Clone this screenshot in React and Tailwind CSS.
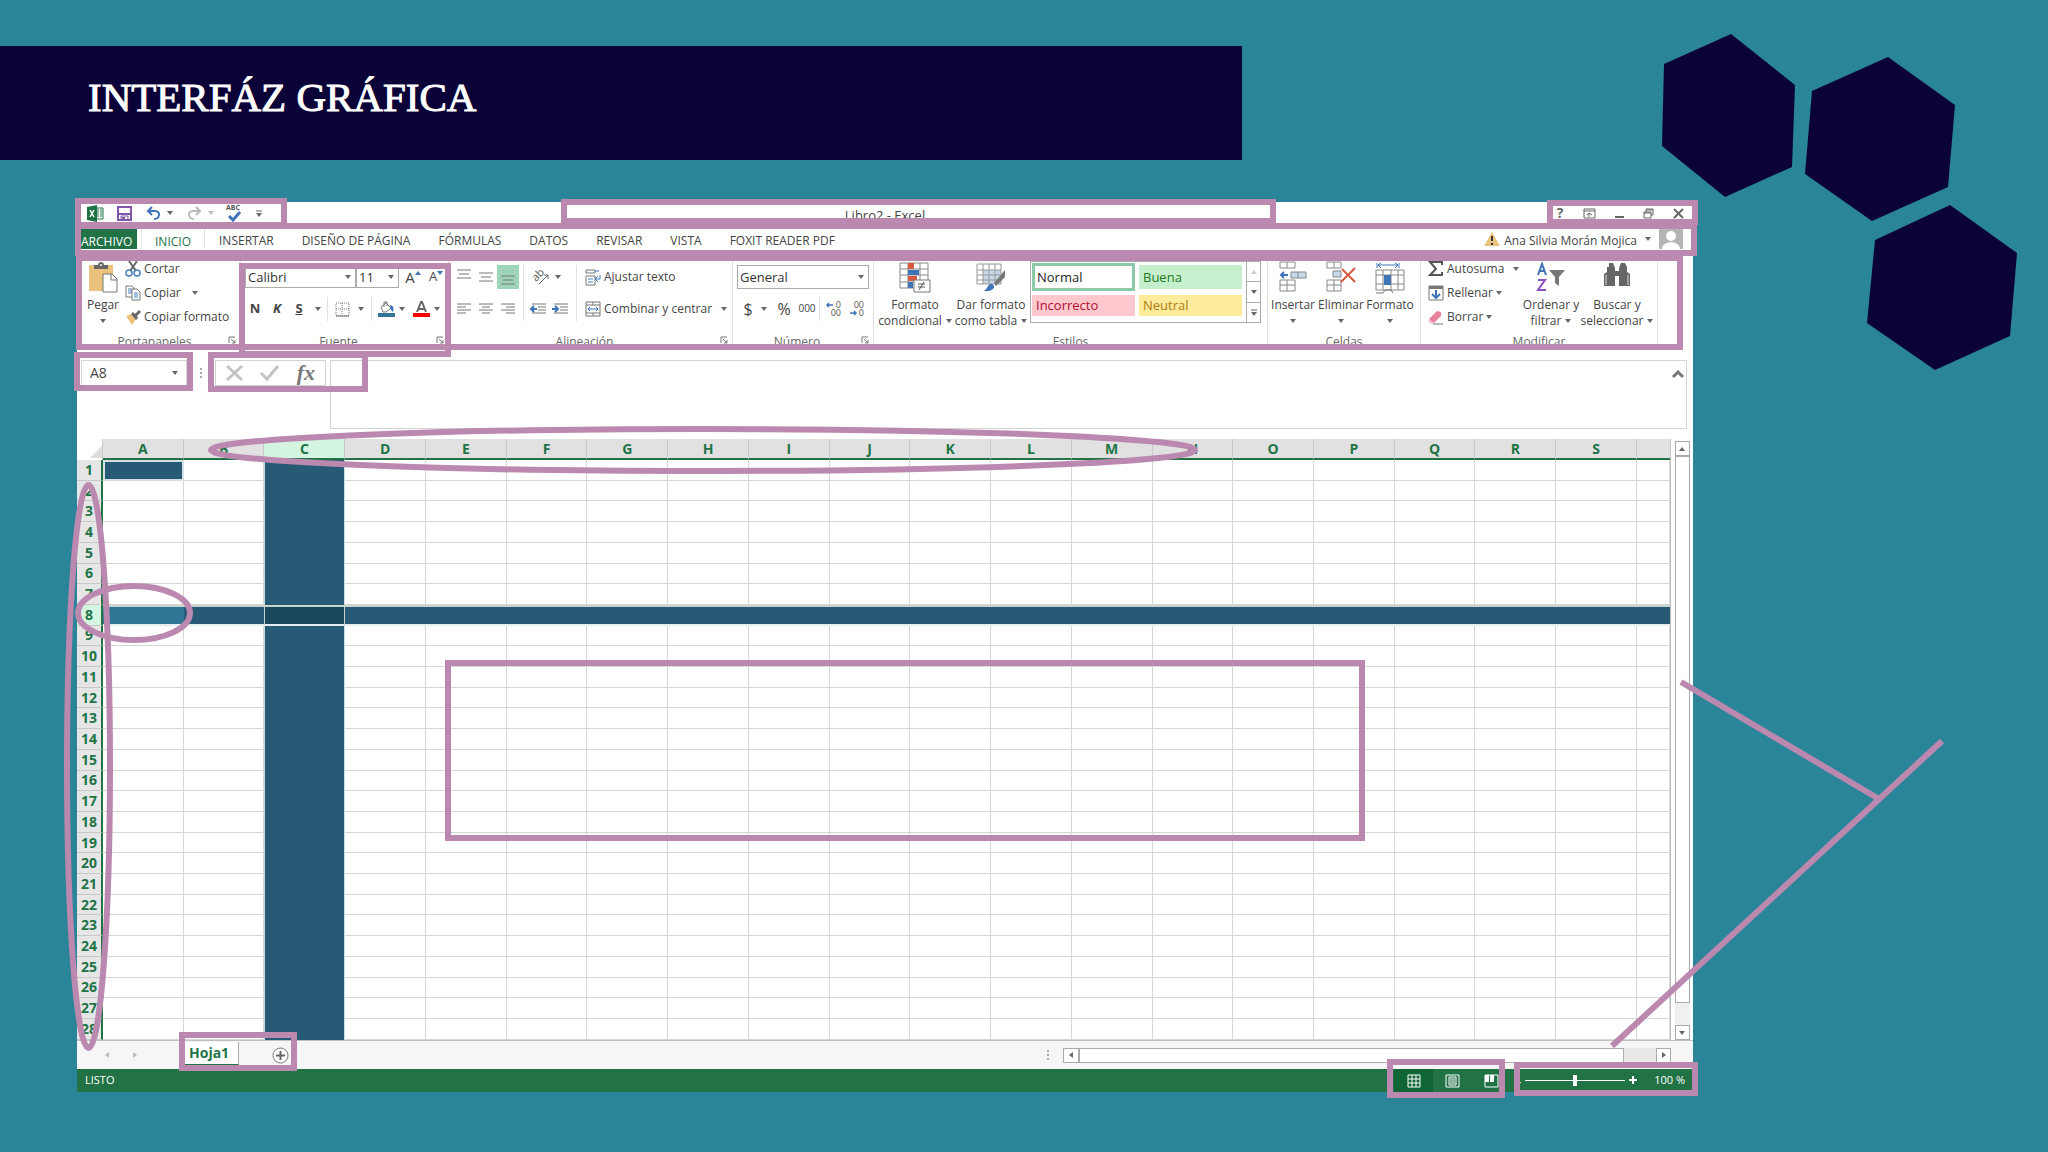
import React from 'react';

const COLUMNS = 'ABCDEFGHIJKLMNOPQRS'.split('');
const ROWS = Array.from({ length: 28 }, (_, i) => i + 1);
const TABS = ['INSERTAR', 'DISEÑO DE PÁGINA', 'FÓRMULAS', 'DATOS', 'REVISAR', 'VISTA', 'FOXIT READER PDF'];

const Svg = ({ w, h, children, className = 'shrink-0' }) => (
  <svg width={w} height={h} viewBox={`0 0 ${w} ${h}`} fill="none" className={`overflow-visible ${className}`} aria-hidden="true">
    {children}
  </svg>
);

const Arrow = ({ className = 'shrink-0', color = '#666' }) => (
  <Svg w={6} h={4} className={className}><path d="M0 0h6L3 4z" fill={color} /></Svg>
);

const Launcher = () => (
  <Svg w={8} h={8}>
    <path d="M1 7V1h6M3 3l4 4M7 4v3H4" stroke="#777" />
  </Svg>
);

/* ---------- icons ---------- */

const ExcelIcon = () => (
  <Svg w={17} h={17}>
    <path d="M9 3h7v11H9z" fill="#fff" stroke="#217346" />
    <path d="M10 5h2M13 5h2M10 7h2M13 7h2M10 9h2M13 9h2M10 11h2M13 11h2" stroke="#217346" />
    <path d="M0 2l10-2v17L0 15z" fill="#1e7145" />
    <path d="M3 5l4 7M7 5l-4 7" stroke="#fff" strokeWidth="1.5" />
  </Svg>
);

const SaveIcon = () => (
  <Svg w={15} h={15}>
    <path d="M1 1h13v13H1z" stroke="#8057a8" strokeWidth="2" />
    <path d="M1 8h13" stroke="#8057a8" strokeWidth="2" />
    <path d="M4 14v-4h7v4" stroke="#8057a8" />
    <path d="M5 11h3v3H5z" fill="#8057a8" />
  </Svg>
);

const UndoIcon = ({ color, flip }) => (
  <Svg w={15} h={14}>
    <g transform={flip ? 'translate(15 0) scale(-1 1)' : undefined}>
      <path d="M6 1L2 5l4 4M2 5h7c6 0 5 8-1 8" stroke={color} strokeWidth="2" />
    </g>
  </Svg>
);

const SpellIcon = () => (
  <Svg w={16} h={17}>
    <text x="0" y="5" fontSize="7" fontWeight="bold" fill="#555" fontFamily="Open Sans, sans-serif">ABC</text>
    <path d="M3 11l4 4 7-8" stroke="#3f74b8" strokeWidth="3" />
  </Svg>
);

const PasteIcon = () => (
  <Svg w={30} h={31}>
    <path d="M1 3h24v26H1z" fill="#ebc27c" />
    <path d="M6 7V3h4c0-4 6-4 6 0h4v4z" fill="#666" />
    <circle cx="13" cy="3" r="1" fill="#fff" />
    <path d="M15 12h9l5 5v13H15z" fill="#fff" stroke="#777" />
    <path d="M23 12v6h6" stroke="#777" />
  </Svg>
);

const CutIcon = () => (
  <Svg w={16} h={16}>
    <path d="M4 0l7 10M12 0L5 10" stroke="#666" strokeWidth="2" />
    <circle cx="4" cy="12" r="3" stroke="#4a7ebb" strokeWidth="1.5" />
    <circle cx="12" cy="12" r="3" stroke="#4a7ebb" strokeWidth="1.5" />
  </Svg>
);

const CopyIcon = () => (
  <Svg w={16} h={16}>
    <path d="M1 1h6l2 2v9H1z" fill="#fff" stroke="#777" />
    <path d="M3 4h4M3 6h4M3 8h4" stroke="#4a7ebb" />
    <path d="M7 4h5l3 3v8H7z" fill="#fff" stroke="#777" />
    <path d="M9 8h4M9 10h4M9 12h4" stroke="#4a7ebb" />
  </Svg>
);

const BrushIcon = () => (
  <Svg w={16} h={16}>
    <path d="M1 7l5-2 5 5-4 6z" fill="#ebc27c" />
    <path d="M6 5l2-2 2 2 4-4 2 2-4 4 1 2-2 2z" fill="#666" />
  </Svg>
);

const BordersIcon = () => (
  <Svg w={15} h={15}>
    <path d="M1 1h13v13H1zM7 1v13M1 7h13" stroke="#777" strokeDasharray="1 1" />
    <path d="M1 14h13" stroke="#777" />
  </Svg>
);

const FillIcon = () => (
  <Svg w={17} h={17}>
    <path d="M3 6l5-4 5 5-5 4H5z" fill="#fff" stroke="#777" />
    <path d="M6 6V1h3v4" stroke="#777" />
    <path d="M12 4c4 1 4 4 3 7-2-1-2-3-3-4z" fill="#3f74b8" />
    <path d="M0 12h17v4H0z" fill="#2f7595" />
  </Svg>
);

const FontColorIcon = () => (
  <Svg w={17} h={17}>
    <path d="M4 11L8 1h1l4 10M6 8h5" stroke="#666" strokeWidth="2" />
    <path d="M0 12h17v4H0z" fill="#f00" />
  </Svg>
);

const LINES = {
  top: 'M0 1h14M2 5h10M0 9h14',
  middle: 'M0 4h14M2 8h10M0 12h14',
  bottom: 'M0 7h14M2 11h10M0 15h14',
  left: 'M0 3h14M0 6h9M0 9h14M0 12h9',
  center: 'M0 3h14M3 6h8M0 9h14M3 12h8',
  right: 'M0 3h14M5 6h9M0 9h14M5 12h9',
};
const LinesIcon = ({ kind }) => (
  <Svg w={14} h={16}><path d={LINES[kind]} stroke="#777" /></Svg>
);

const OrientationIcon = () => (
  <Svg w={17} h={17}>
    <text x="0" y="0" fontSize="11" fill="#555" transform="translate(4 13) rotate(-45)" fontFamily="Open Sans, sans-serif">ab</text>
    <path d="M7 15l9-9M12 6h4v4" stroke="#666" />
  </Svg>
);

const IndentIcon = ({ out }) => (
  <Svg w={16} h={14}>
    <path d="M2 2h14M8 5h8M8 8h8M2 11h14" stroke="#777" />
    <path d={out ? 'M7 7H1M4 4L1 7l3 3' : 'M0 7h6M3 4l3 3-3 3'} stroke="#3f74b8" strokeWidth="2" />
  </Svg>
);

const WrapIcon = () => (
  <Svg w={16} h={17}>
    <path d="M1 1h9v3H1zM1 7h9v9H1z" stroke="#777" />
    <path d="M3 10h5M3 13h5" stroke="#4a7ebb" />
    <path d="M10 2h4M15 6v4h-4M13 7l-3 3 3 3" stroke="#3f74b8" />
  </Svg>
);

const MergeIcon = () => (
  <Svg w={16} h={16}>
    <path d="M1 1h14v14H1zM1 4h14M1 12h14M8 1v3M8 12v3" stroke="#777" />
    <path d="M3 8h10M5 6L3 8l2 2M11 6l2 2-2 2" stroke="#3f74b8" />
  </Svg>
);

const DecimalIcon = ({ more }) => (
  <Svg w={16} h={16}>
    <g fontSize="9" fill="#555" textAnchor="end" fontFamily="Open Sans, sans-serif">
      <text x="15" y="7">{more ? '0' : '00'}</text>
      <text x="15" y="15">{more ? '00' : '0'}</text>
    </g>
    <path d={more ? 'M7 4H1M3 2L1 4l2 2' : 'M1 12h6M5 10l2 2-2 2'} stroke="#3f74b8" strokeWidth="1.5" />
  </Svg>
);

const CondFormatIcon = () => (
  <Svg w={32} h={31}>
    <path d="M1 1h28v25H1zM1 7h28M1 13h28M1 20h28M9 1v25M21 1v25" stroke="#888" />
    <path d="M9 1h6v6H9zM9 14h9v5H9z" fill="#d65a3c" />
    <path d="M9 8h11v5H9zM9 20h5v6H9z" fill="#3f74b8" />
    <path d="M15 18h16v12H15z" fill="#fff" stroke="#777" />
    <path d="M19 22h7M19 25h7M25 20l-5 8" stroke="#555" />
  </Svg>
);

const TableFormatIcon = () => (
  <Svg w={31} h={31}>
    <path d="M7 8h18v14H7z" fill="#c5d7e8" />
    <path d="M1 2h24v20H1zM1 8h24M1 13h24M1 18h24M7 2v20M13 2v20M19 2v20" stroke="#999" />
    <path d="M29 8v7l-9 9-2-3z" fill="#777" />
    <path d="M7 29c5-1 4-8 9-7 5 3 1 8-9 7z" fill="#3f74b8" />
  </Svg>
);

const InsertCellsIcon = () => (
  <Svg w={28} h={31}>
    <path d="M1 0h15v6H1zM8 0v6M1 18h15v11H1zM8 18v11M1 23h15" stroke="#888" />
    <path d="M12 10h15v6H12z" fill="#c5d7e8" stroke="#888" />
    <path d="M19 10v6" stroke="#888" />
    <path d="M9 13H2M5 10l-3 3 3 3" stroke="#3f74b8" strokeWidth="2" />
  </Svg>
);

const DeleteCellsIcon = () => (
  <Svg w={30} h={31}>
    <path d="M1 0h14v6H1zM8 0v6M1 18h14v11H1zM8 18v11M1 23h14" stroke="#888" />
    <path d="M7 9h8v6H7z" fill="#c5d7e8" stroke="#888" />
    <path d="M16 7l13 13M29 6L15 20" stroke="#d65a3c" strokeWidth="2" />
  </Svg>
);

const FormatCellsIcon = () => (
  <Svg w={30} h={32}>
    <path d="M2 1v5M24 1v5M3 3h20M6 1L3 3l3 3M20 1l3 2-3 3" stroke="#3f74b8" />
    <path d="M1 8h28v20H1zM1 13h28M1 22h28M8 8v20M16 8v20M23 8v20" stroke="#888" />
    <path d="M9 13h7v10H9z" fill="#3f74b8" />
    <path d="M1 31h7l2-3h6l2 3" stroke="#777" />
  </Svg>
);

const SigmaIcon = () => (
  <Svg w={16} h={16}><path d="M14 4V1H2l6 7-6 6h12v-3" stroke="#555" strokeWidth="2" /></Svg>
);

const FillDownIcon = () => (
  <Svg w={16} h={16}>
    <path d="M1 1h14v14H1z" stroke="#777" />
    <path d="M1 1h14v3H1z" fill="#777" />
    <path d="M8 5v8M4 9l4 4 4-4" stroke="#3f74b8" strokeWidth="2" />
  </Svg>
);

const EraserIcon = () => (
  <Svg w={16} h={16}>
    <path d="M1 10l8-8 4 1v4l-7 7z" fill="#e8829a" />
    <path d="M1 10l5 4-2 1-3-2z" fill="#f3b9c6" />
    <path d="M5 15h10" stroke="#777" />
  </Svg>
);

const SortIcon = () => (
  <Svg w={30} h={31}>
    <path d="M2 13L6 2l4 11M3 9h6" stroke="#3f74b8" strokeWidth="2" />
    <path d="M2 18h7l-7 10h8" stroke="#8a4fc0" strokeWidth="2" />
    <path d="M13 8h16l-6 7v9l-4-3v-6z" fill="#777" />
  </Svg>
);

const FindIcon = () => (
  <Svg w={28} h={26}>
    <path d="M6 1h4l2 5v18H1V12l3-2V5h2zM18 1h4l2 4v5l3 2v12H16V6z" fill="#666" />
    <path d="M12 9h4v5h-4z" fill="#666" />
    <path d="M3 13v10M25 13v10" stroke="#ddd" />
  </Svg>
);

/* ---------- ribbon pieces ---------- */

const IconButton = ({ label, className = '', children }) => (
  <button aria-label={label} className={`flex shrink-0 items-center justify-center ${className}`}>{children}</button>
);

const TextButton = ({ icon, label, arrow, gap = '' }) => (
  <button className="flex h-6 items-center gap-[3px] whitespace-nowrap">
    <span className="flex w-4 justify-center">{icon}</span>
    <span>{label}</span>
    {arrow && <Arrow className={`shrink-0 ${gap}`} />}
  </button>
);

const BigButton = ({ icon, lines, className }) => (
  <button className={`flex shrink-0 flex-col items-center pt-[13px] leading-4 whitespace-nowrap ${className}`}>
    <span className="flex h-[35px] items-start">{icon}</span>
    <span>{lines[0]}</span>
    <span className="flex h-4 items-center gap-1">{lines[1]}<Arrow /></span>
  </button>
);

const Group = ({ label, launcher, className, children }) => (
  <section className={`flex shrink-0 flex-col border-r border-[#e1e1e1] ${className}`}>
    <div className="flex h-[82px]">{children}</div>
    <div className="flex h-5 items-end text-[#666]">
      <span className="flex-1 text-center">{label}</span>
      {launcher && <span className="pr-1 pb-1.5"><Launcher /></span>}
    </div>
  </section>
);

const Picker = ({ label, value, className }) => (
  <span className={`relative flex border border-[#ababab] bg-white ${className}`}>
    <select aria-label={label} className="w-full appearance-none bg-transparent pl-0.5 text-[13px] leading-5 text-[#333] outline-none">
      <option>{value}</option>
    </select>
    <Arrow className="pointer-events-none absolute top-1/2 right-1 -translate-y-1/2" />
  </span>
);

const Divider = () => <span className="h-6 w-px shrink-0 bg-[#e1e1e1]" />;

/* ---------- window parts ---------- */

function TitleBar() {
  return (
    <header className="flex h-[27px] items-start justify-between">
      <div className="flex h-[22px] w-[220px] items-center pl-2.5">
        <ExcelIcon />
        <IconButton label="Guardar" className="ml-[13px]"><SaveIcon /></IconButton>
        <IconButton label="Deshacer" className="ml-3.5 gap-1.5"><UndoIcon color="#3f74b8" /><Arrow /></IconButton>
        <IconButton label="Rehacer" className="ml-3.5 gap-1.5"><UndoIcon color="#bbb" flip /><Arrow color="#bbb" /></IconButton>
        <IconButton label="Ortografía" className="ml-3"><SpellIcon /></IconButton>
        <IconButton label="Personalizar" className="ml-3.5">
          <Svg w={6} h={7}><path d="M0 1h6" stroke="#666" /><path d="M0 3h6L3 7z" fill="#666" /></Svg>
        </IconButton>
      </div>
      <h2 className="h-[22px] text-[13px] leading-[26px]">Libro2 - Excel</h2>
      <div className="flex h-[22px] w-[220px] items-center justify-end text-[#666]">
        <IconButton label="Ayuda" className="w-[30px] text-sm font-bold">?</IconButton>
        <IconButton label="Opciones de cinta" className="w-[29px]">
          <Svg w={13} h={11}><path d="M1 1h11v9H1zM1 3h11M6 9V5M4 7l2-2 3 2" stroke="#666" /></Svg>
        </IconButton>
        <IconButton label="Minimizar" className="w-[30px]">
          <Svg w={9} h={11}><path d="M0 9h9" stroke="#666" strokeWidth="2" /></Svg>
        </IconButton>
        <IconButton label="Restaurar" className="w-[29px]">
          <Svg w={11} h={11}><path d="M1 4h7v6H1zM3 4V1h7v6H8M1 5h7M3 2h7" stroke="#666" /></Svg>
        </IconButton>
        <IconButton label="Cerrar" className="w-[30px]">
          <Svg w={11} h={11}><path d="M1 1l9 9M10 1l-9 9" stroke="#666" strokeWidth="2" /></Svg>
        </IconButton>
      </div>
    </header>
  );
}

function TabBar() {
  return (
    <nav className="flex h-5 items-center pr-2.5 pl-1 leading-5 whitespace-nowrap">
      <button className="h-5 w-14 bg-[#217346] pt-[3px] text-left text-white">ARCHIVO</button>
      <button className="ml-1 h-5 w-16 border-x border-[#e1e1e1] pt-[3px] text-[#217346]">INICIO</button>
      {TABS.map((t) => (
        <button key={t} className="px-3.5 pt-[3px]">{t}</button>
      ))}
      <button className="ml-auto flex h-5 items-center">
        <Svg w={16} h={14}>
          <path d="M8 0l8 14H0z" fill="#ebc27c" />
          <path d="M8 4v5M8 11v2" stroke="#333" strokeWidth="2" />
        </Svg>
        <span className="mr-2 ml-1 pt-[3px]">Ana Silvia Morán Mojica</span>
        <Arrow />
        <span className="ml-2 flex h-5 w-6 items-end justify-center bg-[#b5b5b5]">
          <Svg w={20} h={19}>
            <circle cx="10" cy="6" r="5" fill="#fff" />
            <path d="M1 19c0-9 18-9 18 0z" fill="#fff" />
          </Svg>
        </span>
      </button>
    </nav>
  );
}

function Ribbon() {
  return (
    <div className="flex h-[101px] overflow-hidden pl-1">
      <Group label="Portapapeles" launcher className="w-[160px]">
        <BigButton className="w-11" icon={<PasteIcon />} lines={['Pegar', '']} />
        <div className="flex flex-col pt-2">
          <TextButton icon={<CutIcon />} label="Cortar" />
          <TextButton icon={<CopyIcon />} label="Copiar" arrow gap="ml-2" />
          <TextButton icon={<BrushIcon />} label="Copiar formato" />
        </div>
      </Group>

      <Group label="Fuente" launcher className="w-[208px]">
        <div className="flex flex-col gap-2 pt-4 pl-1">
          <div className="flex h-6 items-center">
            <Picker label="Fuente" value="Calibri" className="w-[111px]" />
            <Picker label="Tamaño" value="11" className="w-[43px]" />
            <IconButton label="Aumentar" className="w-7 text-[15px]">A<Arrow className="mb-2 rotate-180" color="#3f74b8" /></IconButton>
            <IconButton label="Disminuir" className="w-[18px] text-[13px]">A<Arrow className="mb-2" color="#3f74b8" /></IconButton>
          </div>
          <div className="flex h-6 items-center">
            <IconButton label="Negrita" className="w-5 text-[13px] font-bold">N</IconButton>
            <IconButton label="Cursiva" className="w-6 text-[13px] font-bold italic">K</IconButton>
            <IconButton label="Subrayado" className="w-[38px] gap-3 text-[13px] font-bold"><u>S</u><Arrow /></IconButton>
            <Divider />
            <IconButton label="Bordes" className="w-[43px] gap-2"><BordersIcon /><Arrow /></IconButton>
            <Divider />
            <IconButton label="Relleno" className="w-[38px] gap-1"><FillIcon /><Arrow /></IconButton>
            <IconButton label="Color de fuente" className="w-8 gap-1"><FontColorIcon /><Arrow /></IconButton>
          </div>
        </div>
      </Group>

      <Group label="Alineación" launcher className="w-[284px]">
        <div className="flex flex-col gap-2 pt-4 pl-1">
          <div className="flex h-6 items-center">
            <IconButton label="Arriba" className="w-[22px]"><LinesIcon kind="top" /></IconButton>
            <IconButton label="Medio" className="w-[22px]"><LinesIcon kind="middle" /></IconButton>
            <IconButton label="Abajo" className="h-6 w-[22px] bg-[#9fd5b7]"><LinesIcon kind="bottom" /></IconButton>
          </div>
          <div className="flex h-6 items-center">
            <IconButton label="Izquierda" className="w-[22px]"><LinesIcon kind="left" /></IconButton>
            <IconButton label="Centro" className="w-[22px]"><LinesIcon kind="center" /></IconButton>
            <IconButton label="Derecha" className="w-[22px]"><LinesIcon kind="right" /></IconButton>
          </div>
        </div>
        <div className="mt-4 ml-1 flex h-14 w-[54px] flex-col gap-2 border-x border-[#e1e1e1]">
          <IconButton label="Orientación" className="ml-1.5 h-6 w-8 gap-1.5"><OrientationIcon /><Arrow /></IconButton>
          <div className="flex h-6 items-center gap-1.5 pl-1.5">
            <IconButton label="Reducir sangría"><IndentIcon out /></IconButton>
            <IconButton label="Aumentar sangría"><IndentIcon /></IconButton>
          </div>
        </div>
        <div className="flex flex-col gap-2 pt-4 pl-2">
          <TextButton icon={<WrapIcon />} label="Ajustar texto" />
          <TextButton icon={<MergeIcon />} label="Combinar y centrar" arrow gap="ml-1.5" />
        </div>
      </Group>

      <Group label="Número" launcher className="w-[141px]">
        <div className="flex flex-col gap-2 pt-4 pl-1">
          <Picker label="Formato de número" value="General" className="h-6 w-[132px]" />
          <div className="flex h-6 items-center">
            <IconButton label="Moneda" className="w-9 gap-2 text-base">$<Arrow /></IconButton>
            <IconButton label="Porcentaje" className="w-[22px] text-base">%</IconButton>
            <IconButton label="Millares" className="w-[24px] text-[10px]">000</IconButton>
            <Divider />
            <IconButton label="Más decimales" className="w-[27px]"><DecimalIcon more /></IconButton>
            <IconButton label="Menos decimales" className="w-5"><DecimalIcon /></IconButton>
          </div>
        </div>
      </Group>

      <Group label="Estilos" className="w-[394px]">
        <BigButton className="w-[82px]" icon={<CondFormatIcon />} lines={['Formato', 'condicional']} />
        <BigButton className="w-[70px]" icon={<TableFormatIcon />} lines={['Dar formato', 'como tabla']} />
        <div className="mt-3 ml-1 flex h-[62px] w-[231px] border border-[#ababab] text-[13px]">
          <div className="grid flex-1 grid-cols-2 gap-x-1 gap-y-0.5 p-px pr-1 pb-1">
            <button className="border-3 border-[#8cc9a8] pl-0.5 text-left leading-5 text-[#222]">Normal</button>
            <button className="my-0.5 bg-[#c6efce] pl-1 text-left leading-5 text-[#1c7a1c]">Buena</button>
            <button className="my-0.5 bg-[#ffc7ce] pl-1 text-left leading-5 text-[#b01030]">Incorrecto</button>
            <button className="my-0.5 bg-[#ffeb9c] pl-1 text-left leading-5 text-[#ad7a10]">Neutral</button>
          </div>
          <div className="flex w-3.5 flex-col divide-y divide-[#ababab] border-l border-[#ababab]">
            <IconButton label="Subir" className="flex-1"><Arrow className="rotate-180" color="#ccc" /></IconButton>
            <IconButton label="Bajar" className="flex-1"><Arrow /></IconButton>
            <IconButton label="Más" className="flex-1">
              <Svg w={6} h={7}><path d="M0 1h6" stroke="#666" /><path d="M0 3h6L3 7z" fill="#666" /></Svg>
            </IconButton>
          </div>
        </div>
      </Group>

      <Group label="Celdas" className="w-[153px]">
        <BigButton className="w-[50px]" icon={<InsertCellsIcon />} lines={['Insertar', '']} />
        <BigButton className="w-[46px]" icon={<DeleteCellsIcon />} lines={['Eliminar', '']} />
        <BigButton className="w-[52px]" icon={<FormatCellsIcon />} lines={['Formato', '']} />
      </Group>

      <Group label="Modificar" className="w-[237px]">
        <div className="flex w-[98px] flex-col pt-2 pl-[7px]">
          <TextButton icon={<SigmaIcon />} label="Autosuma" arrow gap="ml-1.5" />
          <TextButton icon={<FillDownIcon />} label="Rellenar" arrow />
          <TextButton icon={<EraserIcon />} label="Borrar" arrow />
        </div>
        <BigButton className="w-16" icon={<SortIcon />} lines={['Ordenar y', 'filtrar']} />
        <BigButton className="w-[68px]" icon={<FindIcon />} lines={['Buscar y', 'seleccionar']} />
      </Group>
    </div>
  );
}

function FormulaBar() {
  return (
    <div className="flex h-[89px] items-start pt-2.5 pr-1.5 pl-1">
      <div className="flex h-[26px] w-[106px] items-center border border-[#d4d4d4] pr-2 pl-2">
        <input aria-label="Cuadro de nombres" defaultValue="A8" className="w-full text-sm outline-none" />
        <Arrow />
      </div>
      <span className="flex h-[26px] w-7 items-center justify-center">
        <Svg w={2} h={11}><path d="M1 0v2M1 4v2M1 8v2" stroke="#aaa" strokeWidth="2" /></Svg>
      </span>
      <div className="flex h-[26px] w-[111px] items-center justify-between border border-[#d4d4d4] px-2.5">
        <IconButton label="Cancelar"><Svg w={17} h={16}><path d="M1 1l15 14M16 1L1 15" stroke="#c4c4c4" strokeWidth="3" /></Svg></IconButton>
        <IconButton label="Introducir"><Svg w={19} h={16}><path d="M1 8l6 6L18 1" stroke="#c4c4c4" strokeWidth="3" /></Svg></IconButton>
        <IconButton label="Insertar función" className="font-['Liberation_Serif',serif] text-[22px] leading-6 font-bold text-[#777] italic">fx</IconButton>
      </div>
      <div className="ml-1 flex h-[69px] flex-1 items-start border border-[#d4d4d4] pr-0.5">
        <textarea aria-label="Barra de fórmulas" className="h-full flex-1 resize-none outline-none" />
        <IconButton label="Contraer" className="mt-2">
          <Svg w={12} h={9}><path d="M1 8l5-5 5 5" stroke="#777" strokeWidth="3" /></Svg>
        </IconButton>
      </div>
    </div>
  );
}

function cellClass(col, row) {
  if (row === 8) {
    const edge = 'border-t-2 border-b-2 border-t-[#c8d3d0] border-b-[#e6eef2]';
    if (col === 'A') return `${edge} bg-[#2f7595]`;
    if (col === 'C') return `${edge} border-x border-x-[#c8d3d0] bg-[#1c485c]`;
    return `${edge} bg-[#265a75]`;
  }
  if (col === 'C') return 'border-x border-x-[#c9dbe6] bg-[#265a75]';
  if (col === 'A' && row === 1) return 'border-2 border-[#d5e0e6] bg-[#265a75]';
  return 'border-r border-b border-[#d6d6d6] bg-white';
}

function Sheet() {
  return (
    <div className="flex h-[601px]">
      <div className="min-w-0 flex-1">
        <table className="h-[601px] w-full table-fixed border-separate border-spacing-0 border-r border-[#c0c0c0] text-sm leading-4 font-bold text-[#217346]">
          <colgroup>
            <col className="w-[26px]" />
            {COLUMNS.map((c) => <col key={c} />)}
            <col className="w-[33px]" />
          </colgroup>
          <thead>
            <tr className="h-[21px]">
              <th className="border-r border-[#ccc] p-0">
                <Svg w={12} h={12} className="mt-1 ml-auto"><path d="M12 0v12H0z" fill="#dcdcdc" /></Svg>
              </th>
              {COLUMNS.map((c) => (
                <th key={c} scope="col" className={`border-r border-b-2 border-r-[#c8c8c8] border-b-[#217346] p-0 ${c === 'C' ? 'bg-[#d3f5e1]' : 'bg-[#e1e1e1]'}`}>{c}</th>
              ))}
              <th className="border-b-2 border-[#217346] bg-[#e1e1e1] p-0" />
            </tr>
          </thead>
          <tbody>
            {ROWS.map((r) => (
              <tr key={r}>
                <th scope="row" className={`border-r-2 border-b border-r-[#217346] border-b-[#c8c8c8] p-0 ${r === 8 ? 'bg-[#d3f5e1]' : 'bg-[#e6e6e6]'}`}>{r}</th>
                {COLUMNS.map((c) => <td key={c} className={`p-0 ${cellClass(c, r)}`} />)}
                <td className={`p-0 ${cellClass('', r)}`} />
              </tr>
            ))}
          </tbody>
        </table>
      </div>
      <div className="flex w-[22px] flex-col items-center bg-white pt-0.5">
        <IconButton label="Desplazar arriba" className="h-[15px] w-[15px] border border-[#ababab]"><Arrow className="rotate-180" /></IconButton>
        <div className="w-[15px] flex-1 bg-[#f0f0f0] pb-[22px]">
          <div className="h-full border border-[#ababab] bg-white" />
        </div>
        <IconButton label="Desplazar abajo" className="h-[15px] w-[15px] border border-[#ababab]"><Arrow /></IconButton>
      </div>
    </div>
  );
}

function SheetBar() {
  return (
    <div className="flex h-[29px] items-center border-t border-[#c0c0c0] bg-[#f6f6f6] pr-[22px]">
      <IconButton label="Hoja anterior" className="ml-[27px]"><Arrow className="rotate-90" color="#bbb" /></IconButton>
      <IconButton label="Hoja siguiente" className="ml-[22px]"><Arrow className="-rotate-90" color="#bbb" /></IconButton>
      <button className="mb-0.5 ml-[47px] h-6 w-[54px] border-r border-b-2 border-r-[#ababab] border-b-[#217346] bg-white pl-1 text-left text-sm font-bold text-[#217346]">Hoja1</button>
      <IconButton label="Hoja nueva" className="ml-[33px]">
        <Svg w={17} h={17}>
          <circle cx="8.500" cy="8.500" r="7.500" fill="#fff" stroke="#777" />
          <path d="M8.500 4v9M4 8.500h9" stroke="#666" strokeWidth="2" />
        </Svg>
      </IconButton>
      <span className="ml-auto mr-3.5"><Svg w={2} h={11}><path d="M1 0v2M1 4v2M1 8v2" stroke="#aaa" strokeWidth="2" /></Svg></span>
      <div className="flex h-[15px] w-[608px]">
        <IconButton label="Desplazar a la izquierda" className="w-4 border border-[#ababab] bg-white"><Arrow className="rotate-90" /></IconButton>
        <div className="flex-1 bg-[#e9e9e9] pr-8"><div className="h-full border border-[#ababab] bg-white" /></div>
        <IconButton label="Desplazar a la derecha" className="w-[15px] border border-[#ababab] bg-white"><Arrow className="-rotate-90" /></IconButton>
      </div>
    </div>
  );
}

function StatusBar() {
  return (
    <footer className="flex h-[23px] items-center bg-[#217346] pr-2 pl-2 text-[11px] text-white">
      <span>LISTO</span>
      <div className="mr-1.5 ml-auto flex h-full">
        <IconButton label="Normal" className="w-[39px] bg-[#0f6535]">
          <Svg w={14} h={14}><path d="M1 1h12v12H1zM5 1v12M9 1v12M1 5h12M1 9h12" stroke="#fff" /></Svg>
        </IconButton>
        <IconButton label="Diseño de página" className="w-[39px]">
          <Svg w={15} h={14}><path d="M1 1h13v12H1zM4 3h7v8H4zM5 5h5M5 7h5M5 9h5" stroke="#fff" /></Svg>
        </IconButton>
        <IconButton label="Vista previa" className="w-[38px]">
          <Svg w={15} h={14}><path d="M1 1h13v12H1z" stroke="#fff" /><path d="M1 1h4v7H1zM6 1h4v7H6z" fill="#fff" /></Svg>
        </IconButton>
      </div>
      <button aria-label="Alejar" className="mr-1 text-base leading-4">-</button>
      <input
        type="range"
        aria-label="Zoom"
        defaultValue={50}
        className="w-[100px] appearance-none bg-transparent [&::-webkit-slider-runnable-track]:h-px [&::-webkit-slider-runnable-track]:bg-white [&::-webkit-slider-thumb]:-mt-[5px] [&::-webkit-slider-thumb]:h-[11px] [&::-webkit-slider-thumb]:w-1 [&::-webkit-slider-thumb]:appearance-none [&::-webkit-slider-thumb]:bg-white"
      />
      <IconButton label="Acercar" className="mr-4 ml-1">
        <Svg w={9} h={9}><path d="M4 0v8M0 4h8" stroke="#fff" strokeWidth="2" /></Svg>
      </IconButton>
      <span>100 %</span>
    </footer>
  );
}

const Oval = ({ className }) => (
  <div className={`absolute ${className}`}>
    <svg className="block h-full w-full overflow-visible" fill="none" aria-hidden="true">
      <ellipse cx="50%" cy="50%" rx="50%" ry="50%" stroke="#bb88b0" strokeWidth="6" />
    </svg>
  </div>
);

/* Markers drawn over the parts of the window that the slide explains */
function Markers() {
  const box = 'absolute border-6 border-[#bb88b0]';
  return (
    <div className="pointer-events-none absolute inset-0">
      <div className={`${box} -top-1 -left-0.5 h-[30px] w-[212px]`} />
      <div className={`${box} -top-[3px] right-[417px] left-[484px] h-[25px]`} />
      <div className={`${box} -top-0.5 -right-[5px] h-[25px] w-[151px]`} />
      <div className={`${box} top-[21px] -right-1 -left-0.5 h-[33px]`} />
      <div className={`${box} top-[53px] right-2.5 -left-px h-[95px]`} />
      <div className={`${box} top-[61px] left-[162px] h-[94px] w-[212px]`} />
      <div className={`${box} top-[150px] -left-[3px] h-[39px] w-[119px]`} />
      <div className={`${box} top-[150px] left-[131px] h-10 w-[160px]`} />
      <div className={`${box} top-[458px] right-[328px] left-[368px] h-[181px]`} />
      <div className={`${box} top-[830px] left-[102px] h-[39px] w-[118px]`} />
      <div className={`${box} top-[857px] right-[188px] h-[39px] w-[118px]`} />
      <div className={`${box} top-[860px] -right-[5px] h-[34px] w-[184px]`} />

      <Oval className="top-[227px] right-[498px] left-[134px] h-[42px]" />
      <Oval className="top-[283px] -left-[10px] h-[563px] w-[43px]" />
      <Oval className="top-[384px] left-[1px] h-[54px] w-[112px]" />

      <Svg w={340} h={380} className="absolute top-[473px] -right-[252px]">
        <path d="M76 7l198 117M7 371L337 66" stroke="#bb88b0" strokeWidth="6" />
      </Svg>
    </div>
  );
}

export default function App() {
  return (
    <div className="relative min-h-screen overflow-hidden bg-[#2a8599] pt-[46px] pb-[60px] font-['Open_Sans',sans-serif] text-xs text-[#444]">
      <Svg w={355} h={336} className="absolute top-[34px] right-[31px]">
        <g fill="#0b0338">
          <path d="M69 0l64 51-3 82-67 30L0 112l2-82z" />
          <path d="M226 23l67 48-7 82-76 34-67-47 7-83z" />
          <path d="M288 171l67 48-7 83-75 34-68-47 8-83z" />
        </g>
      </Svg>

      <div className="flex h-[114px] w-[1242px] max-w-full items-center bg-[#0b0338] pb-3 pl-[88px]">
        <h1 className="font-['Liberation_Serif',serif] text-[41px] leading-none font-normal text-white [-webkit-text-stroke:1px_white]">INTERFÁZ GRÁFICA</h1>
      </div>

      <main className="relative mt-[42px] mr-[355px] ml-[77px] bg-white">
        <TitleBar />
        <TabBar />
        <Ribbon />
        <FormulaBar />
        <Sheet />
        <SheetBar />
        <StatusBar />
        <Markers />
      </main>
    </div>
  );
}
